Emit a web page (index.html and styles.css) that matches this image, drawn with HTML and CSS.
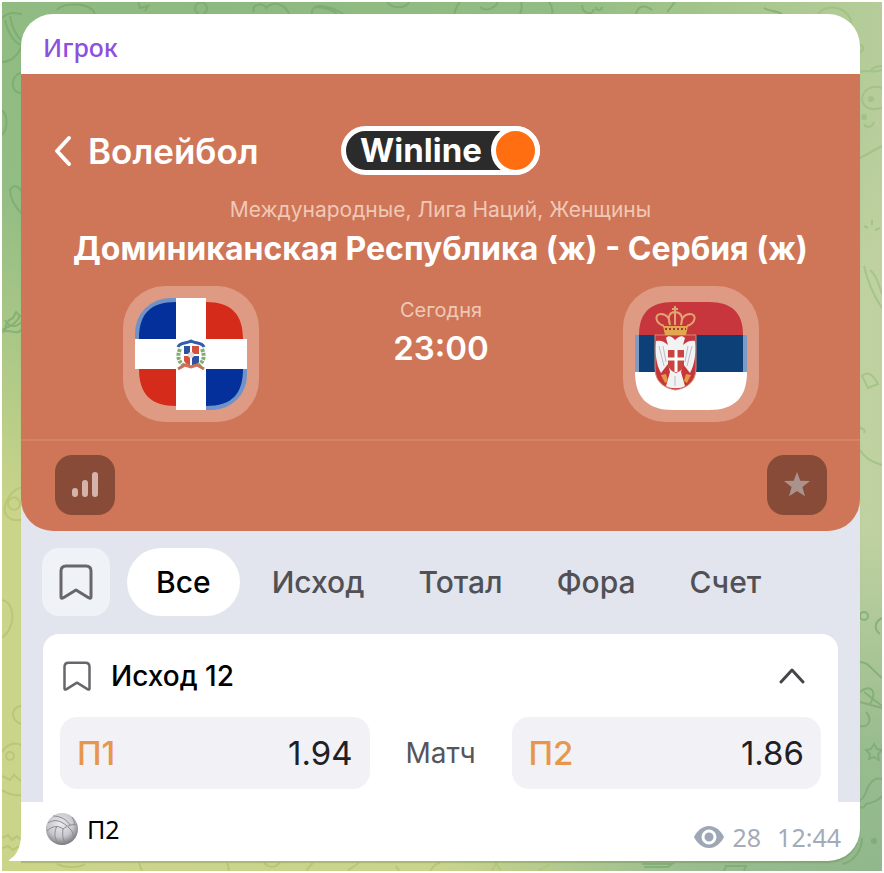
FILE: index.html
```html
<!doctype html>
<html lang="ru">
<head>
	<meta charset="UTF-8">
	<meta name="viewport" content="width=device-width, initial-scale=1">
	<title>Игрок</title>
	<link rel="stylesheet" href="styles.css">
</head>
<body>
	<div class="chat">
		<svg class="doodles" viewBox="0 0 880 869" preserveAspectRatio="none" aria-hidden="true">
			<g class="dark">
				<path d="M0 16c8-8 14-4 20-4M3 18c3 12 8 22 16 25M8 14c2 12 6 20 13 26M0 60c12 0 20-12 21-22"/>
				<path d="M55 8c6-8 34-8 38 4M136 0l2 6 8-2-3 5M197 12a6 6 0 1 1 4 0M252 10c-4-8 10-10 12-4 8-8 20-4 24 8M310 12c-2-10 14-12 34 2M312 5c10 0 18 2 24 8M385 0c6 8 20 6 22 0"/>
				<path d="M452 12c2-6 4-10 6-12M478 5c6 6 16 0 18-5M518 12c2-4 2-8 1-12M550 12c1-4 0-8-3-12M580 3c0 8 10 12 12 4M594 5a3 3 0 1 0 6 0M634 12c2-8 8-10 16-4M665 10l8-10M762 6c6 4 12 2 18 6"/>
				<path d="M19 71c-11 2-11 20 0 20M0 108c6 6 6 18 0 25M21 198c0-14-10-17-13-10 0 10 8 20 13 25M0 328c8-4 14-6 18-14l-4-4-3 6c-6 2-8 8-8 14M3 318c6 10 14 6 18 0M0 330c8-4 14 4 19-2"/>
			</g>
			<g class="olive">
				<path d="M21 485c-12 2-20 16-18 26 4 8 12 8 18 6M18 502a6 6 0 1 1-8-6 6 6 0 0 1 8 6M0 598c14 2 14 30-1 38M20 704c-12 0-12 16 0 18M0 750c6-10 16-10 20-6M4 754a4 4 0 1 0 8 0 4 4 0 1 0-8 0M0 774l8 4 4-5 7 6M0 788c6 4 14 6 20 5M0 836l6-3 4 5 5-4 4 4M0 846l6-2 5 4 6-4"/>
				<path d="M55 862c8 4 22 4 28 0M140 869l-3-8M225 861c2 3 1 5 2 8M262 861c6 6 12 4 16 0M305 869c0-3 3-5 6-8M346 869c3-4 10-6 10-8M394 864l3 5M428 869c4-6 8-8 10-8M490 869l4-8 5 8M548 862c-6 4-10 6-12 7"/>
			</g>
			<g class="light">
				<path d="M816 12c8-10 26-8 32 4 4 10-4 20-8 22M861 46a4 4 0 1 1-8 1 4 4 0 0 1 8-1M858 70c8-3 14 2 22-2M868 70c2-4 6-6 12-6M880 86c-10-4-20 2-20 12 2 10 12 10 20 8M862 122c2 4 8 4 10-2M858 156l22-12"/>
				<path d="M862 224l4 2M870 218v5M878 226l-5 2M862 264c4 18 10 30 18 42M868 268c8 6 10 20 12 24M860 374c6-6 12 0 16 8l-10 4zM858 425c2 4 6 0 4 6M858 448c4 8 12 12 22 15"/>
			</g>
			<g class="dark">
				<path d="M858 660c8 0 10 6 22 16M858 690c10-8 18-2 10 12M858 700l22 6M862 690l18 14M866 614a4 4 0 1 1-8 0 4 4 0 0 1 8 0M880 616c-8 4-8 12-2 16M858 724c10 2 12-8 6-14M872 742l3 5 5 1-4 4 1 6-5-3-5 2 1-5-4-4 5-1zM858 798c6-2 6-12 10-16 4-6 8-6 12-5M858 798c-4 8 4 10 6 4 6-1 12-3 16-8M840 862c12-2 20-14 20-26M640 862h30l-4 3h-24M722 869l2-5h20l-2 5"/>
				<circle class="dot" cx="872" cy="839" r="2"/>
			</g>
			<g class="light">
				<circle class="dot" cx="869" cy="97" r="2"/>
				<circle class="dot" cx="862" cy="115" r="2"/>
			</g>
		</svg>

		<div class="bubble">
			<svg class="tail" viewBox="0 0 12 28" aria-hidden="true"><path d="M12 0C12 14 8 22 0 27v1h12z"/></svg>
			<div class="author">Игрок</div>

			<div class="photo">
				<div class="match">
					<div class="topbar">
						<button type="button" class="back">
							<svg width="20" height="32" viewBox="0 0 20 32" aria-hidden="true"><path d="M16 3L4 16l12 13"/></svg>
							Волейбол
						</button>
						<div class="winline"><span>Winline</span><i></i></div>
					</div>
					<div class="league">Международные, Лига Наций, Женщины</div>
					<h1 class="teams">Доминиканская Республика (ж) - Сербия (ж)</h1>
					<div class="versus">
						<div class="flag">
							<svg viewBox="0 0 112 112" role="img" aria-label="Доминиканская Республика">
								<clipPath id="clip1"><rect width="112" height="112" rx="35"/></clipPath>
								<g clip-path="url(#clip1)">
									<path fill="#6f93c8" d="M0 0h45v42H0zM70 70h42v42H70z"/>
								</g>
								<path fill="#03309a" d="M41 4v37H4c0-25 11-37 37-37zM71 71h37c0 25-11 37-37 37z"/>
								<path fill="#d52b1a" d="M71 4c25 0 37 12 37 37H71zM4 71h37v37C16 108 4 96 4 71z"/>
								<path fill="#fff" d="M41 0h30v41h41v30H71v41H41V71H0V41h41z"/>
								<path fill="none" stroke="#315dac" stroke-width="3" d="M43 49c2-5 7-3 13-6 6 3 11 1 13 6"/>
								<g fill="none" stroke="#7fae70" stroke-width="4" stroke-dasharray="3 1"><path d="M45 51c-3 7-2 12 4 17M67 51c3 7 2 12-4 17"/></g>
								<path fill="#2e52a2" d="M49 48h7v8h-7zM57 57h7v7c-2 3-5 4-7 5z"/>
								<path fill="#d6513c" d="M57 48h7v8h-7zM49 57h7v11c-3-1-6-3-7-5z"/>
								<path stroke="#fff" stroke-width="2" d="M56 47v22M48 57h17"/>
								<circle cx="56" cy="57" r="3" fill="#e6ddd5"/>
								<path fill="none" stroke="#cd7059" stroke-width="3" d="M43 71l7-4 6 2 6-2 7 4"/>
							</svg>
						</div>
						<div class="when">
							<span class="day">Сегодня</span>
							<time class="time">23:00</time>
						</div>
						<div class="flag">
							<svg viewBox="0 0 112 112" role="img" aria-label="Сербия">
								<path fill="#c6363c" d="M4 37C4 15 15 4 38 4h36c23 0 34 11 34 33z"/>
								<path fill="#7c9cc4" d="M0 37h112v37H0z"/>
								<path fill="#0c4076" d="M4 37h104v37H4z"/>
								<path fill="#fff" d="M0 74h112c0 25-12 38-38 38H38C12 112 0 99 0 74z"/>
								<path fill="#c6363c" stroke="#d68b6a" d="M20 37h41v33c0 14-9 20-20.500 22C29 90 20 84 20 70z"/>
								<path fill="#f2f2f3" d="M40 42c-3-4-7-5-9-2l2 7c-4-4-8-5-12-4-1 12 0 23 5 32l7-9 2 8-4 14c4 3 15 3 19 0l-4-14 2-8 7 9c5-9 6-20 5-32-4-1-8 0-12 4l2-7c-3-3-6-2-10 2z"/>
								<path fill="#c9443f" d="M33 52h16v16c-2 4-5 6-8 7-3-1-6-3-8-7z"/>
								<path stroke="#fff" stroke-width="3" d="M41 52v22M33 61h16"/>
								<path stroke="#b9bdc8" stroke-width="1" d="M24 48l5 20M28 48l3 16M57 48l-5 20M53 48l-3 16M40 78v10"/>
								<path fill="#e49a3e" d="M26 77l5-1 2 7-3 2zM49 83l2-7 5 1-4 8z"/>
								<path fill="#e4a650" d="M28 28h25l-2 9H30z"/>
								<g fill="none" stroke="#dfa66d" stroke-width="2"><path d="M29 28c-9-3-10-12-3-12 6 0 9 5 9 11M52 28c9-3 10-12 3-12-6 0-9 5-9 11M35 27c-3-9 0-13 5-13s9 4 6 13M40 8v19M37 11h6"/></g>
								<path stroke="#a33a30" stroke-width="2" stroke-dasharray="2 2" d="M30 31h21"/>
							</svg>
						</div>
					</div>
					<div class="tools">
						<button type="button" class="tool" aria-label="Статистика">
							<svg width="28" height="28" viewBox="0 0 28 28" aria-hidden="true"><path class="bars" d="M4 20v3M14 12v11M24 4v19"/></svg>
						</button>
						<button type="button" class="tool" aria-label="В избранное">
							<svg width="28" height="28" viewBox="0 0 28 28" aria-hidden="true"><path class="star" d="M14 1l3.300 8.700 9.700.4-7.600 5.900 2.600 9.300L14 20l-8 5.300L8.600 16 1 10.100l9.700-.4z"/></svg>
						</button>
					</div>
				</div>

				<div class="tabs">
					<button type="button" class="saved" aria-label="Закладки">
						<svg width="36" height="36" viewBox="0 0 36 36" aria-hidden="true"><path d="M8 2h20q5 0 5 5v26q0 2-2 1L18 26 5 34q-2 1-2-1V7q0-5 5-5z"/></svg>
					</button>
					<button type="button" class="tab active">Все</button>
					<button type="button" class="tab">Исход</button>
					<button type="button" class="tab">Тотал</button>
					<button type="button" class="tab">Фора</button>
					<button type="button" class="tab">Счет</button>
				</div>

				<div class="market">
					<div class="market-head">
						<svg width="30" height="30" viewBox="0 0 36 36" aria-hidden="true"><path d="M8 2h20q5 0 5 5v26q0 2-2 1L18 26 5 34q-2 1-2-1V7q0-5 5-5z"/></svg>
						<h2>Исход 12</h2>
						<button type="button" class="fold" aria-label="Свернуть">
							<svg width="26" height="18" viewBox="0 0 26 18" aria-hidden="true"><path d="M2 15L13 3l11 12"/></svg>
						</button>
					</div>
					<div class="odds">
						<button type="button" class="odd"><b>П1</b><span>1.94</span></button>
						<span class="period">Матч</span>
						<button type="button" class="odd"><b>П2</b><span>1.86</span></button>
					</div>
				</div>
			</div>

			<div class="caption">
				<svg width="34" height="34" viewBox="0 0 34 34" role="img" aria-label="Волейбольный мяч">
					<defs>
						<radialGradient id="ball" cx="45%" cy="35%" r="65%">
							<stop offset="0" stop-color="#ececef"/>
							<stop offset=".6" stop-color="#c9c9cd"/>
							<stop offset="1" stop-color="#77777c"/>
						</radialGradient>
					</defs>
					<circle cx="17" cy="17" r="16" fill="url(#ball)"/>
					<g fill="none" stroke="#8b8b91" stroke-width="1">
						<path d="M18 17C13 13 7 14 2 19M18 17c5-4 10-5 14-4M18 17c-1 6 0 11 3 15M8 4c8 0 14 4 17 9M3 11c6-4 12-3 19 3M23 15c5 4 6 8 5 13M12 14c-3 6-3 11 1 17M27 5c2 3 3 6 2 8"/>
					</g>
				</svg>
				<span class="text">П2</span>
				<span class="meta">
					<svg width="30" height="22" viewBox="0 0 30 22" aria-hidden="true"><path d="M15 0C8 0 3 5 0 11c3 6 8 11 15 11s12-5 15-11C27 5 22 0 15 0z"/><circle cx="15" cy="11" r="6"/></svg>
					<span>28</span>
					<time>12:44</time>
				</span>
			</div>
		</div>
	</div>
</body>
</html>
```
FILE: styles.css
```css
*{
	margin:0;
	padding:0;
	box-sizing:border-box;
}
body{
	padding:2px;
	background:#fff;
	font-family:Inter,"Liberation Sans",sans-serif;
}
button{
	border:0;
	background:none;
	font-family:inherit;
	color:inherit;
	cursor:pointer;
}
svg{
	display:block;
	flex:none;
}
.chat{
	position:relative;
	padding:12px 22px 10px 19px;
	background:
		radial-gradient(ellipse 85% 62% at 25% 0,#8dba80 0,#92bd84 45%,rgba(146,189,132,0) 100%),
		radial-gradient(ellipse 50% 42% at 100% 103%,#8fb68c 0,#98bc8e 40%,rgba(152,188,142,0) 100%),
		linear-gradient(to right,#cbd58a 0,#c8d48c 55%,#bfd1a1 100%);
}
.doodles{
	position:absolute;
	left:0;
	top:0;
	width:100%;
	height:100%;
	fill:none;
	stroke-width:2;
}
.dark{
	stroke:#78a86f;
	opacity:.7;
}
.olive{
	stroke:#b5c373;
	opacity:.8;
}
.light{
	stroke:#9fc083;
	opacity:.8;
}
.dark .dot{
	fill:#78a86f;
}
.light .dot{
	fill:#9fc083;
}
.bubble{
	position:relative;
	background:#fff;
	border-radius:32px 32px 32px 0;
	box-shadow:0 2px 1px rgba(90,120,60,.3);
}
/*气泡左下角的小尾巴*/
.tail{
	position:absolute;
	left:-12px;
	bottom:0;
	width:12px;
	height:28px;
	fill:#fff;
}
.author{
	padding:0 22px;
	font:500 25px/60px "Noto Sans","Open Sans",sans-serif;
	height:60px;
	padding-top:3px;
	color:#8c50e0;
}
.photo{
	background:#e2e5ee;
}

/*比赛信息*/
.match{
	padding-top:52px;
	background:#cf7658;
	border-radius:0 0 32px 32px;
	color:#fff;
	text-align:center;
}
.topbar{
	display:grid;
	grid-template-columns:1fr auto 1fr;
	align-items:center;
	padding:0 32px;
}
.back{
	display:flex;
	align-items:center;
	gap:15px;
	font-size:35px;
	font-weight:600;
	line-height:48px;
}
.back svg{
	fill:none;
	stroke:#fff;
	stroke-width:4;
	stroke-linecap:round;
	stroke-linejoin:round;
}
.winline{
	display:flex;
	align-items:center;
	height:49px;
	padding-left:14px;
	background:#2b2b2b;
	border:5px solid #fff;
	border-radius:25px;
}
.winline span{
	font:700 33px/39px Inter,sans-serif;
}
.winline i{
	width:49px;
	height:49px;
	margin:-5px;
	margin-left:9px;
	background:#ff6f12;
	border:5px solid #fff;
	border-radius:50%;
}
.league{
	margin-top:21px;
	font-size:21px;
	line-height:28px;
	color:#f0c8b6;
}
.teams{
	font-size:32px;
	font-weight:700;
	line-height:50px;
	white-space:nowrap;
}
.versus{
	display:grid;
	grid-template-columns:136px 1fr 136px;
	margin-top:12px;
	padding:0 101px 17px 102px;
	border-bottom:2px solid #d48366;
}
.flag{
	height:136px;
	padding:12px;
	background:#df9a83;
	border-radius:42px;
}
.when{
	display:flex;
	flex-direction:column;
	padding-top:10px;
}
.day{
	font-size:20px;
	line-height:28px;
	color:#f0c8b6;
}
.time{
	font-size:33px;
	font-weight:600;
	line-height:48px;
}
.tools{
	display:flex;
	justify-content:space-between;
	padding:14px 33px 16px 34px;
}
.tool{
	display:flex;
	align-items:center;
	justify-content:center;
	width:60px;
	height:60px;
	background:#874b38;
	border-radius:17px;
}
.bars{
	stroke:#d6b3aa;
	stroke-width:6;
	stroke-linecap:round;
}
.star{
	fill:#ab938d;
}

/*选项卡*/
.tabs{
	display:flex;
	align-items:center;
	padding:17px 22px 18px 21px;
}
.saved{
	display:flex;
	align-items:center;
	justify-content:center;
	width:68px;
	height:68px;
	margin-right:17px;
	background:#eff2f6;
	border-radius:17px;
}
.saved path,
.market-head path{
	fill:none;
	stroke:#66666c;
	stroke-width:3;
	stroke-linecap:round;
	stroke-linejoin:round;
}
.tab{
	padding:0 27px;
	font-size:30px;
	font-weight:500;
	line-height:68px;
	color:#505055;
}
.tab.active{
	margin-right:5px;
	padding:0 29px;
	background:#fff;
	border-radius:34px;
	color:#000;
}

/*赔率*/
.market{
	margin:0 22px;
	padding:0 17px 13px;
	background:#fff;
	border-radius:16px 16px 0 0;
}
.market-head{
	display:flex;
	align-items:center;
	gap:19px;
	height:83px;
	padding:0 16px 0 2px;
}
.market-head h2{
	flex:1;
	font-size:28px;
	font-weight:500;
}
.market-head .fold path{
	stroke:#45454a;
}
.odds{
	display:grid;
	grid-template-columns:1fr 142px 1fr;
	align-items:center;
	text-align:center;
}
.odd{
	display:flex;
	align-items:center;
	justify-content:space-between;
	height:72px;
	padding:0 17px;
	background:#f2f2f6;
	border-radius:17px;
	font-size:33px;
	color:#202024;
}
.odd b{
	font-weight:500;
	color:#e6974b;
}
.period{
	font-size:28px;
	color:#55555a;
}

/*消息底部*/
.caption{
	display:flex;
	align-items:center;
	height:59px;
	padding:0 19px 6px 24px;
	font:25px/34px "Noto Sans","Open Sans",sans-serif;
}
.text{
	flex:1;
	margin-left:8px;
}
.meta{
	display:flex;
	align-items:center;
	gap:8px;
	padding-top:16px;
	color:#a2abb7;
}
.meta time{
	margin-left:8px;
}
.meta path{
	fill:#9ea7b5;
}
.meta circle{
	fill:#9ea7b5;
	stroke:#fff;
	stroke-width:3;
}
```
